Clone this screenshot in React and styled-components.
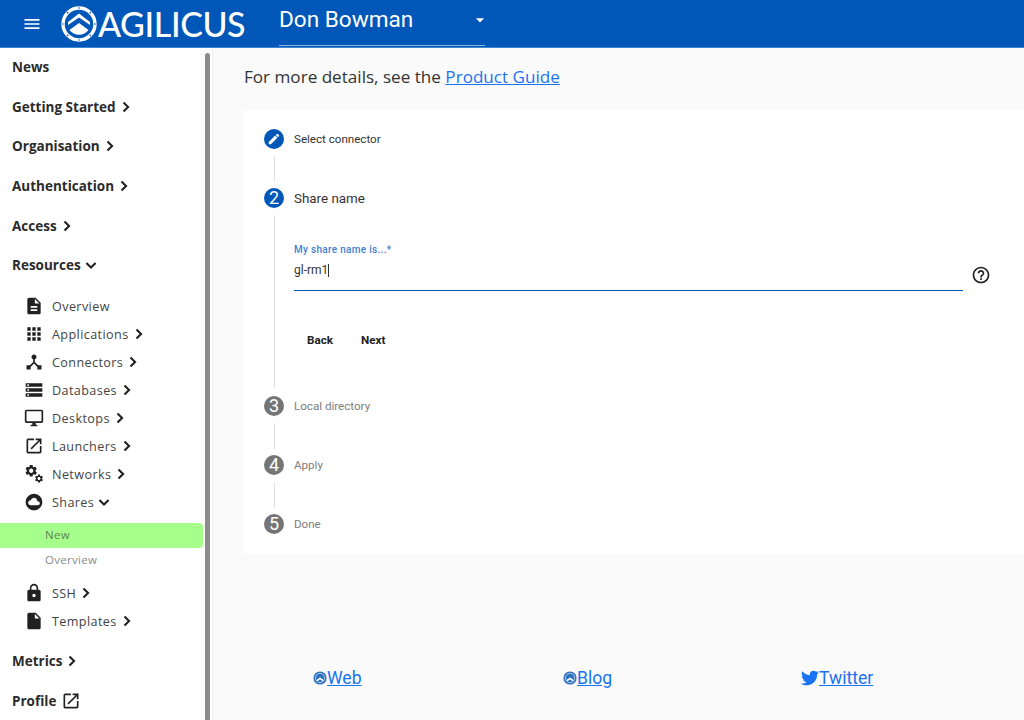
import React from 'react'
import styled, { createGlobalStyle } from 'styled-components'
import {
  MdMenu, MdArrowDropDown, MdDescription, MdApps, MdDeviceHub, MdStorage, MdOutlineDesktopWindows,
  MdOpenInNew, MdCloudCircle, MdLock, MdInsertDriveFile, MdHelpOutline, MdEdit,
} from 'react-icons/md'
import { FaTwitter } from 'react-icons/fa'

const GlobalStyle = createGlobalStyle`
  * { box-sizing: border-box; }
  html, body { margin: 0; padding: 0; height: 720px; overflow: hidden; background: #fff; }
  body { font-family: "Open Sans", "Liberation Sans", sans-serif; color: #212121; }
`

const Page = styled.div`
  width: 1024px;
  height: 720px;
  display: flex;
  flex-direction: column;
  overflow: hidden;
`

const Header = styled.header`
  height: 48px;
  flex: none;
  background: #0057b8;
  display: flex;
  align-items: center;
  color: #fff;
  border-bottom: 1px solid #3f86d0;
`

const MenuBtn = styled.div`
  width: 61px;
  padding-left: 22px;
  display: flex;
  align-items: center;
  font-size: 20px;
`

const LogoWrap = styled.div`
  display: flex;
  align-items: center;
  width: 218px;
  gap: 1px;
`

const LogoText = styled.span`
  font-family: Lato, "Open Sans", sans-serif;
  font-size: 34px;
  line-height: 47px;
  font-weight: 500;
  letter-spacing: -0.4px;
`

const OrgSelect = styled.div`
  width: 206px;
  height: 45px;
  display: flex;
  align-items: center;
  justify-content: space-between;
  border-bottom: 1px solid #8db6e2;
  font-family: Roboto, sans-serif;
  font-size: 22.6px;
  padding-bottom: 7px;
  svg { margin-right: -5px; font-size: 20px; }
`

const Body = styled.div`
  flex: 1;
  display: flex;
  min-height: 0;
`

const Sidebar = styled.aside`
  width: 213px;
  flex: none;
  display: flex;
  background: #fff;
  border-right: 1px solid #f0f0f0;
`

const Nav = styled.nav`
  width: 205px;
  flex: none;
`

const Track = styled.div`
  width: 5px;
  flex: none;
  padding-top: 5px;
`

const Thumb = styled.div`
  height: 100%;
  background: #8c8c8c;
  border-radius: 3px 3px 0 0;
`

const TopItem = styled.div`
  height: 39.6px;
  padding: 0 0 1px 12px;
  display: flex;
  align-items: center;
  font-size: 13.5px;
  font-weight: 700;
  color: #2b2b2b;
`

const SubList = styled.div`
  padding-top: 6px;
  padding-bottom: 7px;
`

const SubItem = styled.div`
  height: 28px;
  padding-top: 1px;
  display: flex;
  align-items: center;
  color: #444;
  font-size: 12.6px;
  letter-spacing: 0.4px;
`

const SubIcon = styled.span`
  width: 52px;
  padding-left: 24px;
  flex: none;
  display: flex;
  font-size: 20px;
  color: #212121;
`

const ChevronSvg = styled.svg`
  width: 20px;
  height: 20px;
  flex: none;
  fill: none;
  stroke: #212121;
  stroke-width: 2.5;
`

const Chevron = () => (
  <ChevronSvg viewBox="0 0 24 24"><path d="M9 6.5 L14.5 12 L9 17.5" /></ChevronSvg>
)

const Down = () => (
  <ChevronSvg viewBox="0 0 24 24"><path d="M6.5 9.5 L12 15 L17.5 9.5" /></ChevronSvg>
)

const ProfileIcon = styled(MdOpenInNew)`
  font-size: 20px;
  margin-left: 5px;
  color: #212121;
`

const LeafList = styled.div`
  display: flex;
  flex-direction: column;
  margin: 7.4px 2px 6px 0;
`

const LeafItem = styled.div`
  height: 25px;
  padding: 0 0 2px 45px;
  display: flex;
  align-items: center;
  border-radius: 0 4px 4px 0;
  font-size: 11.5px;
  letter-spacing: 0.3px;
  color: ${(p) => (p.$active ? '#5f7f59' : '#8a8a8a')};
  background: ${(p) => (p.$active ? '#a5ff8a' : 'transparent')};
`

const Main = styled.main`
  flex: 1;
  background: #fafafa;
  padding: 19px 0 0 31px;
  display: flex;
  flex-direction: column;
`

const Intro = styled.p`
  margin: 0;
  height: 20px;
  line-height: 20px;
  font-size: 17.1px;
  color: #333;
`

const Link = styled.a`
  color: #1a73f0;
  text-decoration: underline;
`

const Card = styled.section`
  margin-top: 23px;
  height: 444px;
  background: #fff;
  padding: 17px 0 0 20px;
  font-family: Roboto, sans-serif;
`

const StepHead = styled.div`
  display: flex;
  align-items: center;
  height: 24px;
  gap: 6px;
`

const Circle = styled.span`
  width: 20px;
  height: 20px;
  flex: none;
  border-radius: 50%;
  background: ${(p) => (p.$on ? '#0057b8' : '#757575')};
  color: #fff;
  display: flex;
  align-items: center;
  justify-content: center;
  font-size: 18px;
  line-height: 20px;
  svg { font-size: 14px; }
`

const StepLabel = styled.span`
  margin-left: 4px;
  font-size: ${(p) => (p.$big ? '13.4px' : '11.6px')};
  color: ${(p) => (p.$dim ? '#7d7d7d' : '#333')};
`

const Connector = styled.div`
  margin: 5px 0 4px 10px;
  width: 1px;
  height: 26px;
  background: #e0e0e0;
`

const StepBody = styled.div`
  display: flex;
  margin-top: 5px;
  margin-bottom: 6px;
  height: 173px;
`

const StepLine = styled.div`
  margin-left: 10px;
  width: 1px;
  background: #e0e0e0;
`

const StepContent = styled.div`
  margin-left: 19px;
  flex: 1;
  display: flex;
  flex-direction: column;
  padding-top: 25px;
`

const FieldRow = styled.div`
  display: flex;
  align-items: flex-start;
`

const Field = styled.div`
  width: 669px;
  height: 51px;
  border-bottom: 1.5px solid #0057b8;
  display: flex;
  flex-direction: column;
`

const FieldLabel = styled.span`
  font-size: 10px;
  font-weight: 500;
  color: #3f7fd0;
  letter-spacing: 0.3px;
  height: 20px;
  line-height: 20px;
`

const FieldValue = styled.span`
  font-size: 12px;
  color: #333;
  line-height: 20px;
  display: flex;
  align-items: center;
`

const Caret = styled.span`
  width: 1px;
  height: 13px;
  background: #333;
`

const HelpIcon = styled(MdHelpOutline)`
  font-size: 20px;
  margin: 25px 0 0 8px;
  color: #212121;
`

const Actions = styled.div`
  display: flex;
  margin-top: 31px;
  gap: 28px;
  padding-left: 13px;
`

const ActionBtn = styled.span`
  font-size: 11.7px;
  font-weight: 700;
  color: #212121;
  line-height: 36px;
`

const Footer = styled.footer`
  margin-top: 114px;
  display: flex;
  height: 20px;
  padding-left: 69px;
  font-family: Roboto, sans-serif;
  font-size: 17.6px;
`

const FootLink = styled.a`
  width: ${(p) => p.$w}px;
  display: flex;
  align-items: center;
  color: #1a73f0;
  span { text-decoration: underline; }
  svg { flex: none; }
`

const ringDots = [0, 45, 90, 135, 180, 225, 270, 315]

const Logo = () => (
  <svg width="36" height="36" viewBox="0 0 36 36">
    <circle cx="18" cy="18" r="16" fill="none" stroke="#fff" strokeWidth="3.4" />
    {ringDots.map((a) => (
      <circle key={a} cx="18" cy="2" r="0.8" fill="#0057b8" transform={`rotate(${a} 18 18)`} />
    ))}
    <path d="M18 7.5 L29 16 L29 19 L18 11.5 L7 19 L7 16 Z" fill="#fff" />
    <path d="M18 17 L27.5 24 A12 12 0 0 1 8.5 24 Z" fill="#fff" />
  </svg>
)

const FootLogo = () => (
  <svg width="14" height="14" viewBox="0 0 36 36">
    <circle cx="18" cy="18" r="17" fill="#2f72bd" />
    <circle cx="18" cy="18" r="12" fill="none" stroke="#fff" strokeWidth="1.5" />
    <path d="M18 17 L28 24 L24 26 L18 22 L12 26 L8 24 Z" fill="#fff" />
  </svg>
)

const gearPath = 'M19.14 12.94c.04-.3.06-.61.06-.94 0-.32-.02-.64-.07-.94l2.03-1.58c.18-.14.23-.41.12-.61l-1.92-3.32c-.12-.22-.37-.29-.59-.22l-2.39.96c-.5-.38-1.03-.7-1.62-.94l-.36-2.54c-.04-.24-.24-.41-.48-.41h-3.84c-.24 0-.43.17-.47.41l-.36 2.54c-.59.24-1.13.57-1.62.94l-2.39-.96c-.22-.08-.47 0-.59.22L2.74 8.87c-.12.21-.08.47.12.61l2.03 1.58c-.05.3-.09.63-.09.94s.02.64.07.94l-2.03 1.58c-.18.14-.23.41-.12.61l1.92 3.32c.12.22.37.29.59.22l2.39-.96c.5.38 1.03.7 1.62.94l.36 2.54c.05.24.24.41.48.41h3.84c.24 0 .44-.17.47-.41l.36-2.54c.59-.24 1.13-.56 1.62-.94l2.39.96c.22.08.47 0 .59-.22l1.92-3.32c.12-.22.07-.47-.12-.61l-2.01-1.58zM12 15.6c-1.98 0-3.6-1.62-3.6-3.6s1.62-3.6 3.6-3.6 3.6 1.62 3.6 3.6-1.62 3.6-3.6 3.6z'

const GearsIcon = () => (
  <svg width="20" height="20" viewBox="0 0 24 24" fill="currentColor">
    <path d={gearPath} transform="translate(0 -0.5) scale(0.72)" />
    <path d={gearPath} transform="translate(12 11.5) scale(0.5)" />
  </svg>
)

const subs = [
  ['Overview', <MdDescription />, false],
  ['Applications', <MdApps />, true],
  ['Connectors', <MdDeviceHub />, true],
  ['Databases', <MdStorage />, true],
  ['Desktops', <MdOutlineDesktopWindows />, true],
  ['Launchers', <MdOpenInNew />, true],
  ['Networks', <GearsIcon />, true],
]

export default function App() {
  return (
    <Page>
      <GlobalStyle />
      <Header>
        <MenuBtn><MdMenu /></MenuBtn>
        <LogoWrap>
          <Logo />
          <LogoText>AGILICUS</LogoText>
        </LogoWrap>
        <OrgSelect>
          Don Bowman
          <MdArrowDropDown />
        </OrgSelect>
      </Header>
      <Body>
        <Sidebar>
          <Nav>
            <TopItem>News</TopItem>
            <TopItem>Getting Started <Chevron /></TopItem>
            <TopItem>Organisation <Chevron /></TopItem>
            <TopItem>Authentication <Chevron /></TopItem>
            <TopItem>Access <Chevron /></TopItem>
            <TopItem>Resources <Down /></TopItem>
            <SubList>
              {subs.map(([name, icon, more]) => (
                <SubItem key={name}>
                  <SubIcon>{icon}</SubIcon>
                  {name}
                  {more && <Chevron />}
                </SubItem>
              ))}
              <SubItem>
                <SubIcon><MdCloudCircle /></SubIcon>
                Shares
                <Down />
              </SubItem>
              <LeafList>
                <LeafItem $active>New</LeafItem>
                <LeafItem>Overview</LeafItem>
              </LeafList>
              <SubItem>
                <SubIcon><MdLock /></SubIcon>
                SSH
                <Chevron />
              </SubItem>
              <SubItem>
                <SubIcon><MdInsertDriveFile /></SubIcon>
                Templates
                <Chevron />
              </SubItem>
            </SubList>
            <TopItem>Metrics <Chevron /></TopItem>
            <TopItem>Profile <ProfileIcon /></TopItem>
          </Nav>
          <Track><Thumb /></Track>
        </Sidebar>
        <Main>
          <Intro>For more details, see the <Link href="#">Product Guide</Link></Intro>
          <Card>
            <StepHead>
              <Circle $on><MdEdit /></Circle>
              <StepLabel>Select connector</StepLabel>
            </StepHead>
            <Connector />
            <StepHead>
              <Circle $on>2</Circle>
              <StepLabel $big>Share name</StepLabel>
            </StepHead>
            <StepBody>
              <StepLine />
              <StepContent>
                <FieldRow>
                  <Field>
                    <FieldLabel>My share name is...*</FieldLabel>
                    <FieldValue>gl-rm1<Caret /></FieldValue>
                  </Field>
                  <HelpIcon />
                </FieldRow>
                <Actions>
                  <ActionBtn>Back</ActionBtn>
                  <ActionBtn>Next</ActionBtn>
                </Actions>
              </StepContent>
            </StepBody>
            <StepHead>
              <Circle>3</Circle>
              <StepLabel $dim>Local directory</StepLabel>
            </StepHead>
            <Connector />
            <StepHead>
              <Circle>4</Circle>
              <StepLabel $dim>Apply</StepLabel>
            </StepHead>
            <Connector />
            <StepHead>
              <Circle>5</Circle>
              <StepLabel $dim>Done</StepLabel>
            </StepHead>
          </Card>
          <Footer>
            <FootLink $w={250}><FootLogo /><span>Web</span></FootLink>
            <FootLink $w={238}><FootLogo /><span>Blog</span></FootLink>
            <FootLink $w={100}><FaTwitter size={18} /><span>Twitter</span></FootLink>
          </Footer>
        </Main>
      </Body>
    </Page>
  )
}
